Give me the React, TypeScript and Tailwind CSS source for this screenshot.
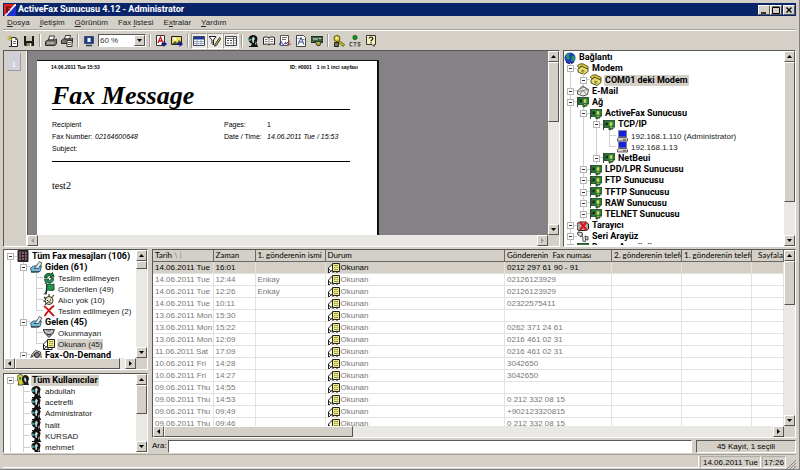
import React from 'react';
import clsx from 'clsx';

type IconName =
  | 'logo' | 'new' | 'save' | 'print' | 'printAll' | 'screen' | 'exportText' | 'exportImage'
  | 'table' | 'filter' | 'columns' | 'user' | 'book' | 'sign' | 'fontDoc' | 'card' | 'key' | 'cts' | 'help'
  | 'globe' | 'modem' | 'mail' | 'network' | 'pc' | 'scanner' | 'serial' | 'archive' | 'tray' | 'resend'
  | 'flag' | 'noRecipient' | 'cross' | 'unread' | 'read' | 'demand' | 'users';

const ICONS: Record<IconName, React.ReactNode> = {
  logo: (
    <>
      <path d="M0 0h11L0 12z" fill="#e02020" />
      <path d="M12 1v11H2z" fill="#2030d0" />
      <path d="M12 0 1 12" stroke="#fff" strokeWidth="1.6" />
      <path d="M3 9V3h4M3 6h3" stroke="#3a1010" strokeWidth="1.2" fill="none" />
    </>
  ),
  new: (
    <>
      <path d="M4.5 2.5h4l2 2v7h-6z" fill="#fff" stroke="#222" />
      <path d="M8.5 2.5v2h2M6 6.5h3M6 8.5h3" stroke="#444" fill="none" strokeWidth=".8" />
      <path d="M3 0v6M0 3h6M1 1l4 4M5 1 1 5" stroke="#b8a820" strokeWidth=".8" />
      <path d="M2 11.5h2" stroke="#222" />
    </>
  ),
  save: (
    <>
      <path d="M1 1h10v10H2l-1-1z" fill="#1c1c10" />
      <path d="M3 1h6v5H3z" fill="#c4c4b8" />
      <path d="M3.5 8h5v3h-5z" fill="#8a8a70" />
      <path d="M7 8.5h1V11H7z" fill="#fff" />
    </>
  ),
  print: (
    <>
      <path d="M4.500 1h5L8.500 5h-5z" fill="#fff" stroke="#222" strokeWidth=".9" />
      <path d="M.5 6.500 3 5h7l1.500-1v4.500L10 10.500H.5z" fill="#77776f" stroke="#222" strokeWidth=".9" />
      <path d="M2 8h7M5 3h3" stroke="#e4e4e0" strokeWidth=".9" />
    </>
  ),
  printAll: (
    <>
      <path d="M4.500.5h5L8.500 4h-5z" fill="#fff" stroke="#222" strokeWidth=".9" />
      <path d="M.5 5.500 2.500 4h8L11.500 3v4L10 8.500H.5z" fill="#77776f" stroke="#222" strokeWidth=".9" />
      <path d="M6 5.500h5v6H6z" fill="#fff" stroke="#222" strokeWidth=".9" />
      <path d="M7 7.500h3M7 9.500h3" stroke="#333" strokeWidth=".8" />
    </>
  ),
  screen: (
    <>
      <path d="M1.500 1.500h9v7h-9z" fill="#1a3f8f" stroke="#3c4c70" />
      <path d="M4.500 3h3v4h-3z" fill="#fff" />
      <path d="M3 10.500h6" stroke="#30405c" strokeWidth="1.500" />
    </>
  ),
  exportText: (
    <>
      <path d="M1.500.5h8v10h-8z" fill="#fff" stroke="#333" />
      <path d="m3 8 2.500-6L8 8M4 6h3" stroke="#d01818" strokeWidth="1.300" fill="none" />
      <path d="M6.500 8h2V6l3.500 3-3.500 3v-2h-2z" fill="#181890" />
    </>
  ),
  exportImage: (
    <>
      <path d="M.5 1.500h10v8H.5z" fill="#e8e060" stroke="#222" />
      <circle cx="4" cy="4" r="1.400" fill="#fff" />
      <path d="m1 9 3-3 2 2 2-3 2 2v2z" fill="#555530" />
      <path d="M6.500 8h2V6l3.500 3-3.500 3v-2h-2z" fill="#181890" />
    </>
  ),
  table: (
    <>
      <path d="M.5 1.500h11v9H.5z" fill="#fff" stroke="#445" />
      <path d="M1 2h10v2.500H1z" fill="#2038a0" />
      <path d="M4 4v6M8 4v6M1 6.500h10M1 8.500h10" stroke="#8090b0" strokeWidth=".8" />
    </>
  ),
  filter: (
    <>
      <path d="M0 1.500h7L4.500 5v5L3 8.500V5z" fill="#fff" stroke="#222" />
      <path d="m6 9.500 4.500-7 1.300 1-4.500 7L5.500 11z" fill="#d8d040" stroke="#222" strokeWidth=".9" />
    </>
  ),
  columns: (
    <>
      <path d="M.5 1.500h11v9H.5z" fill="#fff" stroke="#444" />
      <path d="M8.500 2v8M1 3.500h10" stroke="#555" strokeWidth=".8" />
      <path d="M2 5.500h2M5 5.500h2M2 8h2M5 8h2M9.500 5.500h1M9.500 8h1" stroke="#444" />
    </>
  ),
  user: (
    <>
      <path d="M1.500 4c0-3 3-4 5-4s4 1.500 4 3.500L9.500 8l1.500 4H3.500L5 8.500C3 8.500 1.500 6 1.500 4z" fill="#111" />
      <path d="M6 1.500 5 4l.5 3.500 1.500.5V5.500l1-2zM8.500 6 8 9l1 1z" fill="#d8d8d0" />
      <path d="M2 3.500h2l1 1-1 1.500H2z" fill="#2c9aa0" />
      <path d="M2 11.500h9" stroke="#111" />
    </>
  ),
  book: (
    <>
      <path d="M.5 2.500C3 1.500 5 2 6 3c1-1 3-1.500 5.500-.5v7C9 8.500 7 9 6 10c-1-1-3-1.500-5.500-.5z" fill="#fff" stroke="#222" />
      <path d="M6 3v7M2 4.500h2.500M2 6.500h2.500M7.500 4.500H10M7.500 6.500H10" stroke="#555" strokeWidth=".8" />
    </>
  ),
  sign: (
    <>
      <path d="M1.500.5h8v10h-8z" fill="#fff" stroke="#555" />
      <path d="M3 2.500h5M3 4.500h4" stroke="#444" strokeWidth=".8" />
      <path d="M0 10c2-4 3-4 3-2s2 2 3 0 1 2 3 1" stroke="#2030b0" fill="none" />
      <path d="m6 9 5-3M9 9h3" stroke="#b82838" />
    </>
  ),
  fontDoc: (
    <>
      <path d="M1.500.5h7l2 2v9h-9z" fill="#fff" stroke="#444" />
      <path d="m3 9.500 3-7 3 7M4 7h4" stroke="#30488c" fill="none" />
      <path d="M2.500 3.500h2M7 4.500h2.500" stroke="#667" strokeWidth=".8" />
    </>
  ),
  card: (
    <>
      <path d="M0 1.500h12v6H0z" fill="#3c6048" stroke="#1c3020" />
      <path d="M2 4h5M8 3.500h2" stroke="#dfe8d8" strokeWidth="1.200" />
      <path d="M4 6.500h6l-1 4H6z" fill="#a8b040" stroke="#222" strokeWidth=".8" />
    </>
  ),
  key: (
    <>
      <path d="M6 5.500 11.500 9.500l-1 1.800-2-1-3-3.300z" fill="#d0c028" stroke="#55500c" strokeWidth=".8" />
      <circle cx="4" cy="3.500" r="3" fill="#e0d030" stroke="#55500c" />
      <path d="M1.500 7.500h4v4h-4z" fill="#77774c" stroke="#222" />
      <circle cx="3.500" cy="3" r="1" fill="#fff" />
    </>
  ),
  cts: (
    <>
      <circle cx="6" cy="2.500" r="2.200" fill="#0c9420" stroke="#0a4a14" strokeWidth=".6" />
      <path d="M3.500 7.500H1v3.500h2.500M4.500 7.500h3M6 7.500v4M11.500 7.500H9v1.700h2V11H8.500" stroke="#444" strokeWidth=".9" fill="none" />
    </>
  ),
  help: (
    <>
      <path d="M1.500.5h9v9H9v2L7 9.500H1.500z" fill="#f8f4c0" stroke="#333" />
      <path d="M4.300 3.500c0-2 3.500-2 3.500 0C7.800 5 6 4.800 6 6.200M6 7.300v1.200" stroke="#111" strokeWidth="1.200" fill="none" />
    </>
  ),
  globe: (
    <>
      <circle cx="6" cy="6" r="5.500" fill="#1c3cc0" />
      <path d="M2 3c2-2 4-2 4-1L5 4l1 2-2 2-2-2zM8 4l2-1 1 4-2 3-2-2z" fill="#20985c" />
      <path d="M2 10c2 2 6 2 8 0" stroke="#0c1850" fill="none" />
    </>
  ),
  modem: (
    <>
      <path d="M1 6 5 3l6 3v2.500L7 11.500 1 9z" fill="#e8e070" stroke="#4a4410" strokeWidth=".9" />
      <path d="M.5 3.500C1 .5 6 0 8 2l3 1.500V6L8.500 5 4 3 2.500 5z" fill="#d4c83c" stroke="#4a4410" strokeWidth=".9" />
      <path d="m4.500 7 3 1.200M4.500 8.500l2 .8" stroke="#55501c" strokeWidth=".9" />
    </>
  ),
  mail: (
    <>
      <path d="m.5 6 5-5 6 3.500-1 5L6 11 .5 9z" fill="#eeeeea" stroke="#444" strokeWidth=".9" />
      <path d="m1 6.500 5-1 5.500-1M3 9l3-3.500L9.500 9.500M3 4l4-2 2 1.500" stroke="#666" strokeWidth=".8" fill="none" />
    </>
  ),
  network: (
    <>
      <path d="M.5 1v10" stroke="#444" />
      <path d="M1 1.500h11v6.500H10v2H7.500v1H6V8.500H1z" fill="#2f7d3c" stroke="#173c1c" strokeWidth=".8" />
      <path d="M2.500 3.500h2.300v3H2.500z" fill="#122a14" />
      <path d="M7 3.500h2v3H7zM7 8.500h2.500" fill="#d8d860" stroke="#c8c850" strokeWidth=".7" />
    </>
  ),
  pc: (
    <>
      <path d="M2.500.5h8v6.500h-8z" fill="#1420e0" stroke="#888" />
      <path d="m1.500 8.500 1-1h8l1 1V11h-10z" fill="#d4d0c8" stroke="#444" strokeWidth=".8" />
      <path d="M7 9.700h3" stroke="#333" strokeWidth=".8" />
    </>
  ),
  scanner: (
    <>
      <path d="M0 3.500 3 2h6l2.500 2v5l-2 1.500h-8L0 9z" fill="#aaa" stroke="#222" />
      <path d="m3 2 6.500 8M9.500 2 3 10" stroke="#e01414" strokeWidth="2" />
    </>
  ),
  serial: (
    <>
      <path d="m1 1 4 .5.5 3-2.500 1L.5 3z" fill="#ddd" stroke="#333" />
      <path d="M4 5c4 0 0 5 3 5.500 3 0 1-4 3-3.500" stroke="#777" strokeWidth="1.300" fill="none" />
      <path d="m8 5 3 1v3l-2.500-.5z" fill="#ddd" stroke="#333" strokeWidth=".9" />
    </>
  ),
  archive: (
    <>
      <path d="M1 .5h10v11H1z" fill="#2c2438" stroke="#222" />
      <path d="M2 3h8M2 6h8M2 9h8" stroke="#b0a878" strokeWidth="1.200" strokeDasharray="2 1" />
      <path d="M3 1v10M8.500 1v10" stroke="#94445c" strokeWidth=".8" />
    </>
  ),
  tray: (
    <>
      <path d="m.5 7 3-2h8L10 10.500 1.500 11z" fill="#6fc0dc" stroke="#27566c" strokeWidth=".9" />
      <path d="m4 7.500 2-2L9.500.5 12 2 8.500 7.500z" fill="#d8eef4" stroke="#333" strokeWidth=".8" />
      <path d="M1 11h8" stroke="#222" />
    </>
  ),
  resend: (
    <>
      <path d="M1.500 6C1 2.500 5 0 8 2l1.500-1.500L11 5l-4.500.5L8 4C5.500 3 4 4.500 4 6z" fill="#1c8a40" stroke="#0c3018" strokeWidth=".8" />
      <path d="M10.500 6.500c.5 3.500-3 5.500-6 4L3 12 1.500 7.500 6 7 4.500 8.500C7 9.500 8 8 8 6.500z" fill="#2c9a6a" stroke="#0c3018" strokeWidth=".8" />
    </>
  ),
  flag: (
    <>
      <path d="m3 11.500L4 1" stroke="#111" strokeWidth="1.300" />
      <path d="M4 1.500c2-1.500 4 1 7-.5v6c-3 1.500-5-1-7.500.5z" fill="#22984a" stroke="#123c1c" strokeWidth=".9" />
      <path d="M1 11.500 4 8" stroke="#111" />
    </>
  ),
  noRecipient: (
    <>
      <circle cx="6" cy="6.500" r="4" fill="#e4e4b8" stroke="#333" />
      <path d="m1 3 2 2M11 1 8.500 4M2 11l1.500-2M6 0v2M0 7h2" stroke="#222" strokeWidth="1.100" />
      <path d="M4 6.500h1M7 6h1M4.500 8.500c1-1 2-1 3 0" stroke="#111" fill="none" />
      <path d="m9 1 2 1-1 2z" fill="#d8c828" />
    </>
  ),
  cross: <path d="M1.500 1.500c3 2 6 6 9 9M10.500 1C7 4 4 7 2 10.500" stroke="#d01010" strokeWidth="1.800" fill="none" strokeLinecap="round" />,
  unread: (
    <>
      <path d="M0 2.500h11.500L10 6.500 6 10.500 2 6.500z" fill="#9a949c" stroke="#333" strokeWidth=".9" />
      <path d="m2 3.500 4 2.500 4-2.500" stroke="#eee" fill="none" />
      <path d="M4 7.500h4" stroke="#333" />
    </>
  ),
  read: (
    <>
      <path d="M.5 6 4 2.500 5 6v5.500H.5z" fill="#fff" stroke="#222" />
      <path d="m1 7 2 2.500L5 7M1 11l2-2" stroke="#222" strokeWidth=".9" fill="none" />
      <path d="M4.500 1.500h7v8h-7z" fill="#f0ec88" stroke="#222" />
      <path d="M6 3.500h4M6 5.500h1.500M8.500 5.500H10M6 7.500h4" stroke="#8f8c40" strokeWidth=".9" />
      <path d="M1 11.500h8v-2" stroke="#222" fill="none" />
    </>
  ),
  demand: (
    <>
      <path d="m.5 11 1-5 4-4.500 5 1.500 1 8z" fill="#e4e4e0" stroke="#444" />
      <circle cx="7" cy="6" r="2.500" fill="#888" stroke="#222" />
      <path d="M2 8c1-2 2-3 3-3" stroke="#222" fill="none" />
    </>
  ),
  users: (
    <>
      <path d="M0 4c0-2.500 2-3.500 3.500-3.500S7 2 7 4L6 11H1l1-3C.5 7.500 0 6 0 4z" fill="#d8cc28" stroke="#333" strokeWidth=".8" />
      <path d="M5 5c0-3 2-4 3.500-4s3.500 1 3.500 4l-1 3 1 3H6l1-2C5.500 8.500 5 7 5 5z" fill="#1c1c1c" />
      <path d="m8 3-1 2 1 3 1.500-.5L9 5z" fill="#dcdcd4" />
      <path d="M2 3h2v3H2z" fill="#2c8c8c" />
    </>
  ),
};

function Icon({ name, className = 'size-3' }: { name: IconName; className?: string }) {
  return (
    <svg viewBox="0 0 12 12" className={clsx('shrink-0', className)} fill="none" aria-hidden="true">
      {ICONS[name]}
    </svg>
  );
}

const RAISED = 'border border-t-white border-l-white border-r-[#55534f] border-b-[#55534f] bg-[#d4d0c8]';
const SUNKEN = 'border border-t-[#5a5854] border-l-[#5a5854] border-r-white border-b-white';

type Direction = 'up' | 'down' | 'left' | 'right';

const ARROWS: Record<Direction, string> = {
  up: 'M0 4h5L2.500 1z',
  down: 'M0 1h5L2.500 4z',
  left: 'M4 0v5L1 2.500z',
  right: 'M1 0v5l3-2.500z',
};

function ScrollButton({ direction, muted }: { direction: Direction; muted?: boolean }) {
  return (
    <button type="button" aria-label={direction} className={clsx('flex size-[11px] shrink-0 items-center justify-center', RAISED)}>
      <svg viewBox="0 0 5 5" className="size-[5px]" aria-hidden="true">
        <path d={ARROWS[direction]} fill={muted ? '#9a9894' : '#000'} />
      </svg>
    </button>
  );
}

function ScrollBar({ horizontal, thumb, muted }: { horizontal?: boolean; thumb?: string; muted?: boolean }) {
  return (
    <div className={clsx('flex shrink-0 bg-[#eae8e4]', horizontal ? 'h-[11px]' : 'w-[11px] flex-col')}>
      <ScrollButton direction={horizontal ? 'left' : 'up'} muted={muted} />
      <div className={clsx('flex min-h-0 min-w-0 flex-1', !horizontal && 'flex-col')}>
        {thumb && <div className={clsx(RAISED, thumb)} />}
      </div>
      <ScrollButton direction={horizontal ? 'right' : 'down'} muted={muted} />
    </div>
  );
}

// Guides: I = line through, E = expander, F = first expander, T = branch, L = last branch
interface TreeItem {
  guides: string;
  icon: IconName;
  label: string;
  bold?: boolean;
  selected?: boolean;
}

function Guide({ kind }: { kind: string }) {
  const expander = kind === 'E' || kind === 'F';
  return (
    <span className="relative flex w-[13px] shrink-0 self-stretch pl-[6px]">
      {kind === 'I' && <span className="border-l border-[#d0d0d0]" />}
      {kind === 'L' && <span className="h-1/2 flex-1 border-b border-l border-[#d0d0d0]" />}
      {(kind === 'T' || kind === 'E') && (
        <span className="flex-1 border-l border-[#d0d0d0]">
          <span className="block h-1/2 border-b border-[#d0d0d0]" />
        </span>
      )}
      {kind === 'F' && (
        <span className="flex flex-1 flex-col justify-end">
          <span className="h-1/2 border-t border-l border-[#d0d0d0]" />
        </span>
      )}
      {expander && (
        <span className="absolute inset-0 flex items-center justify-center">
          <span className="flex size-[7px] items-center justify-center border border-[#b4b4b4] bg-white">
            <span className="h-px w-[3px] bg-[#333]" />
          </span>
        </span>
      )}
    </span>
  );
}

function TreeRow({ item }: { item: TreeItem }) {
  return (
    <>
      {item.guides.split('').map((kind, i) => (
        <Guide key={i} kind={kind} />
      ))}
      <Icon name={item.icon} />
      <span
        className={clsx(
          'ml-[2px] px-px leading-[11px] whitespace-nowrap',
          item.bold ? 'font-[Roboto,sans-serif] text-[9px] font-bold text-black' : 'text-[8px] text-[#222]',
          item.selected && 'bg-[#d4d0c8]',
        )}
      >
        {item.label}
      </span>
    </>
  );
}

// The row under the last full one is only shown as far as the panel reaches
function Tree({ items, label, partialHeight }: { items: TreeItem[]; label: string; partialHeight: string }) {
  const full = items.slice(0, -1);
  const partial = items[items.length - 1];

  return (
    <ul aria-label={label} className="flex min-h-0 min-w-0 flex-1 flex-col overflow-hidden bg-white pt-px">
      {full.map((item) => (
        <li key={item.guides + item.label} className="flex min-h-0 flex-1 items-center">
          <TreeRow item={item} />
        </li>
      ))}
      <li className={clsx('shrink-0 overflow-hidden', partialHeight)}>
        <div className="flex h-[11px] items-center">
          <TreeRow item={partial} />
        </div>
      </li>
    </ul>
  );
}

const CONNECTIONS: TreeItem[] = [
  { guides: '', icon: 'globe', label: 'Bağlantı', bold: true },
  { guides: 'E', icon: 'modem', label: 'Modem', bold: true },
  { guides: 'IE', icon: 'modem', label: 'COM01 deki Modem', bold: true, selected: true },
  { guides: 'E', icon: 'mail', label: 'E-Mail', bold: true },
  { guides: 'E', icon: 'network', label: 'Ağ', bold: true },
  { guides: 'IE', icon: 'network', label: 'ActiveFax Sunucusu', bold: true },
  { guides: 'IIE', icon: 'network', label: 'TCP/IP', bold: true },
  { guides: 'IIIT', icon: 'pc', label: '192.168.1.110 (Administrator)' },
  { guides: 'IIIL', icon: 'pc', label: '192.168.1.13' },
  { guides: 'IIE', icon: 'network', label: 'NetBeui', bold: true },
  { guides: 'IE', icon: 'network', label: 'LPD/LPR Sunucusu', bold: true },
  { guides: 'IE', icon: 'network', label: 'FTP Sunucusu', bold: true },
  { guides: 'IE', icon: 'network', label: 'TFTP Sunucusu', bold: true },
  { guides: 'IE', icon: 'network', label: 'RAW Sunucusu', bold: true },
  { guides: 'IE', icon: 'network', label: 'TELNET Sunucusu', bold: true },
  { guides: 'E', icon: 'scanner', label: 'Tarayıcı', bold: true },
  { guides: 'E', icon: 'serial', label: 'Seri Arayüz', bold: true },
  { guides: 'E', icon: 'network', label: 'Dosya Arayüzü', bold: true },
];

const FOLDERS: TreeItem[] = [
  { guides: 'F', icon: 'archive', label: 'Tüm Fax mesajları (106)', bold: true },
  { guides: 'IE', icon: 'tray', label: 'Giden (61)', bold: true },
  { guides: 'IIT', icon: 'resend', label: 'Teslim edilmeyen' },
  { guides: 'IIT', icon: 'flag', label: 'Gönderilen (49)' },
  { guides: 'IIT', icon: 'noRecipient', label: 'Alıcı yok (10)' },
  { guides: 'IIL', icon: 'cross', label: 'Teslim edilmeyen (2)' },
  { guides: 'IE', icon: 'tray', label: 'Gelen (45)', bold: true },
  { guides: 'IIT', icon: 'unread', label: 'Okunmayan' },
  { guides: 'IIL', icon: 'read', label: 'Okunan (45)', selected: true },
  { guides: 'IE', icon: 'demand', label: 'Fax-On-Demand', bold: true },
];

const USERS: TreeItem[] = [
  { guides: 'F', icon: 'users', label: 'Tüm Kullanıcılar', bold: true, selected: true },
  ...['abdullah', 'acetrefli', 'Administrator', 'halit', 'KURSAD', 'mehmet'].map(
    (label): TreeItem => ({ guides: 'IT', icon: 'user', label }),
  ),
];

const MENU: [string, string, string][] = [
  ['', 'D', 'osya'],
  ['', 'İ', 'letişim'],
  ['', 'G', 'örünüm'],
  ['Fax ', 'l', 'istesi'],
  ['E', 'x', 'tralar'],
  ['', 'Y', 'ardım'],
];

const FAXES: [string, string, string, string][] = [
  ['14.06.2011 Tue', '16:01', '', '0212 297 61 90 - 91'],
  ['14.06.2011 Tue', '12:44', 'Enkay', '02126123929'],
  ['14.06.2011 Tue', '12:26', 'Enkay', '02126123929'],
  ['14.06.2011 Tue', '10:11', '', '02322575411'],
  ['13.06.2011 Mon', '15:30', '', ''],
  ['13.06.2011 Mon', '15:22', '', '0262 371 24 61'],
  ['13.06.2011 Mon', '12:09', '', '0216 461 02 31'],
  ['11.06.2011 Sat', '17:09', '', '0216 461 02 31'],
  ['10.06.2011 Fri', '14:28', '', '3042650'],
  ['10.06.2011 Fri', '14:27', '', '3042650'],
  ['09.06.2011 Thu', '14:55', '', ''],
  ['09.06.2011 Thu', '14:53', '', '0 212 332 08 15'],
  ['09.06.2011 Thu', '09:49', '', '+902123320815'],
  ['09.06.2011 Thu', '09:46', '', '0 212 332 08 15'],
];

const COLUMNS: { title: string; width: string }[] = [
  { title: 'Tarih', width: 'w-[60px]' },
  { title: 'Zaman', width: 'w-[42px]' },
  { title: '1. gönderenin ismi', width: 'w-[70px]' },
  { title: 'Durum', width: '' },
  { title: 'Gönderenin  Fax numası', width: 'w-[107px]' },
  { title: '2. gönderenin telefo', width: 'w-[70px]' },
  { title: '1. gönderenin telefo', width: 'w-[70px]' },
  { title: 'Sayfala', width: 'w-[32px]' },
];

function TitleBar() {
  const button = clsx('flex h-[10px] w-[12px] items-center justify-center', RAISED);
  return (
    <header className="flex h-[13px] shrink-0 items-center bg-[#0a246a] px-px">
      <Icon name="logo" />
      <h1 className="ml-[2px] flex-1 font-[Roboto,sans-serif] text-[9px] leading-[13px] font-bold text-white">
        ActiveFax Sunucusu 4.12 - Administrator
      </h1>
      <button type="button" aria-label="Minimize" className={button}>
        <svg viewBox="0 0 8 8" className="size-2"><path d="M1 7h5" stroke="#000" strokeWidth="1.500" /></svg>
      </button>
      <button type="button" aria-label="Maximize" className={button}>
        <svg viewBox="0 0 8 8" className="size-2"><path d="M.5 1.500h7v6h-7zM.5 1h7" stroke="#000" fill="none" /></svg>
      </button>
      <button type="button" aria-label="Close" className={clsx('ml-px', button)}>
        <svg viewBox="0 0 8 8" className="size-2"><path d="m1.500 1.500 5 5M6.500 1.500l-5 5" stroke="#000" strokeWidth="1.300" /></svg>
      </button>
    </header>
  );
}

function ToolButton({ icon, label, pressed }: { icon: IconName; label: string; pressed?: boolean }) {
  return (
    <button
      type="button"
      aria-label={label}
      className={clsx(
        'flex size-4 shrink-0 items-center justify-center',
        pressed && 'border border-t-[#a09c94] border-l-[#a09c94] border-r-white border-b-white bg-[#eceae6]',
      )}
    >
      <Icon name={icon} />
    </button>
  );
}

function Separator() {
  return <span className="mx-[2px] h-[13px] w-[2px] shrink-0 border-r border-l border-l-[#9a968e] border-r-white" />;
}

function ToolBar() {
  return (
    <div className="flex h-[20px] shrink-0 items-center border-t border-white pl-[2px]">
      <ToolButton icon="new" label="Yeni" />
      <ToolButton icon="save" label="Kaydet" />
      <Separator />
      <ToolButton icon="print" label="Yazdır" />
      <ToolButton icon="printAll" label="Tümünü yazdır" />
      <Separator />
      <ToolButton icon="screen" label="Ekran" />
      <div className={clsx('relative mx-px flex h-[13px] w-[48px] bg-white', SUNKEN)}>
        <select aria-label="Zoom" className="w-full appearance-none bg-transparent pl-px text-[8px] leading-[11px] text-[#333]">
          <option>60 %</option>
        </select>
        <span className={clsx('pointer-events-none absolute top-0 right-0 flex h-[11px] w-[11px] items-center justify-center', RAISED)}>
          <svg viewBox="0 0 5 5" className="size-[5px]"><path d={ARROWS.down} /></svg>
        </span>
      </div>
      <Separator />
      <ToolButton icon="exportText" label="Metin aktar" />
      <ToolButton icon="exportImage" label="Resim aktar" />
      <Separator />
      <ToolButton icon="table" label="Liste" pressed />
      <ToolButton icon="filter" label="Filtre" pressed />
      <ToolButton icon="columns" label="Sütunlar" pressed />
      <Separator />
      <ToolButton icon="user" label="Kullanıcılar" />
      <ToolButton icon="book" label="Adres defteri" />
      <ToolButton icon="sign" label="İmza" />
      <ToolButton icon="fontDoc" label="Yazı tipi" />
      <ToolButton icon="card" label="Ağ kartı" />
      <Separator />
      <ToolButton icon="key" label="Lisans" />
      <ToolButton icon="cts" label="CTS" />
      <ToolButton icon="help" label="Yardım" />
    </div>
  );
}

function FaxPage() {
  return (
    <article className="w-[342px] border-t border-r-2 border-[#111] bg-white px-[14px] pt-[3px] text-black">
      <div className="flex justify-between pr-[5px] text-[5px] leading-[6px] font-bold">
        <span>14.06.2011 Tue 15:53</span>
        <span className="flex gap-[5px]">
          <span>ID: #0001</span>
          <span>1 in 1 inci sayfası</span>
        </span>
      </div>
      <div className="mr-[13px] ml-px">
        <h2 className="mt-[12px] border-b border-black font-['Liberation_Serif',serif] text-[26px] leading-[27px] font-bold italic">
          Fax Message
        </h2>
        <dl className="mt-[9px] grid grid-cols-[43px_129px_43px_1fr] border-b border-black pb-[6px] text-[7px] leading-[12px]">
          <dt>Recipient</dt>
          <dd />
          <dt>Pages:</dt>
          <dd>1</dd>
          <dt>Fax Number:</dt>
          <dd className="italic">02164600648</dd>
          <dt>Date / Time:</dt>
          <dd className="italic">14.06.2011 Tue / 15:53</dd>
          <dt>Subject:</dt>
          <dd />
        </dl>
        <p className="mt-[18px] font-['Liberation_Serif',serif] text-[10px] leading-[12px]">test2</p>
      </div>
    </article>
  );
}

function Preview() {
  return (
    <section className={clsx('flex min-w-0 flex-1', SUNKEN)}>
      <aside className="w-[22px] shrink-0 pt-[2px] pl-1">
        <button
          type="button"
          className="flex h-[18px] w-[13px] items-end justify-center border-r border-b border-[#9a9a9a] bg-[#d0d0dc] text-[8px] leading-[10px] text-white"
        >
          1
        </button>
      </aside>
      <div className="flex min-w-0 flex-1 flex-col border-l border-white">
        <div className="flex min-h-0 flex-1">
          <div className="flex min-w-0 flex-1 items-stretch overflow-hidden border-l border-[#5a5854] bg-[#848284] pt-[9px] pl-[9px]">
            <FaxPage />
          </div>
          <ScrollBar thumb="h-[37%]" />
        </div>
        <div className="flex">
          <div className="flex min-w-0 flex-1 flex-col">
            <ScrollBar horizontal muted />
          </div>
          <span className="w-[11px]" />
        </div>
      </div>
    </section>
  );
}

function FaxTable() {
  return (
    <section className={clsx('flex min-h-0 flex-1 flex-col bg-white', SUNKEN)}>
      <div className="flex min-h-0 flex-1">
        <div className="min-w-0 flex-1 overflow-hidden">
          <table className="w-full table-fixed border-collapse text-[8px] leading-[11px]">
            <thead className="font-[Lato,sans-serif]">
              <tr className="bg-[#d4d0c8]">
                {COLUMNS.map(({ title, width }) => (
                  <th
                    key={title}
                    className={clsx(
                      'h-3 overflow-hidden border-r border-b border-[#6a6864] p-0 text-left font-normal whitespace-pre text-black',
                      title === 'Sayfala' ? 'pl-[6px]' : 'pl-[2px]',
                      width,
                    )}
                  >
                    {title}
                    {title === 'Tarih' && <span className="ml-[2px] text-[#8a8882]">\ |</span>}
                  </th>
                ))}
              </tr>
            </thead>
            <tbody>
              {FAXES.map(([date, time, sender, number], i) => (
                <tr key={date + time} className={i === 0 ? 'bg-[#d4d0c8] text-black' : 'text-[#777]'}>
                  {[date, time, sender, 'Okunan', number, '', '', ''].map((cell, col) => (
                    <td key={col} className="h-3 overflow-hidden border-r border-b border-[#e4e2de] p-0 pl-[2px] whitespace-nowrap">
                      {col === 3 ? (
                        <span className="flex h-[11px] items-center gap-px">
                          <Icon name="read" />
                          <span>{cell}</span>
                        </span>
                      ) : (
                        cell
                      )}
                    </td>
                  ))}
                </tr>
              ))}
            </tbody>
          </table>
        </div>
        <ScrollBar thumb="h-[29%]" />
      </div>
      <div className="flex bg-[#d4d0c8]">
        <div className="flex min-w-0 flex-1 flex-col">
          <ScrollBar horizontal thumb="w-[31%]" />
        </div>
        <span className="w-[11px]" />
      </div>
    </section>
  );
}

export default function App() {
  return (
    <div className="flex h-screen flex-col overflow-hidden border-r border-b border-[#808080] bg-[#d4d0c8] px-[3px] pt-[3px] font-['Liberation_Sans',Arial,sans-serif] text-black">
      <TitleBar />
      <nav className="flex h-[14px] shrink-0 items-center gap-[10px] border-b border-[#a8a49c] pl-1 text-[8px] leading-[12px] text-[#222]">
        {MENU.map(([before, key, after]) => (
          <button key={key} type="button" className="whitespace-pre">
            {before}
            <u>{key}</u>
            {after}
          </button>
        ))}
      </nav>
      <ToolBar />

      <main className="flex min-h-0 flex-1 flex-col gap-[2px]">
        <div className="flex min-h-0 flex-[197_1_0%] gap-[3px]">
          <Preview />
          <section className={clsx('flex w-[233px] shrink-0 bg-white', SUNKEN)}>
            <Tree items={CONNECTIONS} label="Bağlantı" partialHeight="h-[3px]" />
            <ScrollBar thumb="h-[81%]" />
          </section>
        </div>

        <div className="flex min-h-0 flex-[205_1_0%] gap-1">
          <div className="flex w-[145px] shrink-0 flex-col gap-[3px]">
            <section className={clsx('flex min-h-0 flex-[122_1_0%] flex-col', SUNKEN)}>
              <div className="flex min-h-0 flex-1">
                <Tree items={FOLDERS} label="Fax mesajları" partialHeight="h-[8px]" />
                <ScrollBar thumb="h-2" />
              </div>
              <div className="flex">
                <div className="flex min-w-0 flex-1 flex-col">
                  <ScrollBar horizontal thumb="w-[95%]" />
                </div>
                <span className="w-[11px]" />
              </div>
            </section>
            <section className={clsx('flex min-h-0 flex-[80_1_0%]', SUNKEN)}>
              <Tree items={USERS} label="Kullanıcılar" partialHeight="h-[10px]" />
              <ScrollBar thumb="h-[52%]" />
            </section>
          </div>

          <div className="flex min-w-0 flex-1 flex-col gap-px">
            <FaxTable />
            <div className="flex h-[14px] shrink-0 items-center text-[8px]">
              <label htmlFor="search" className="w-4 leading-[12px]">
                Ara:
              </label>
              <input id="search" type="text" className={clsx('h-[13px] min-w-0 flex-1 bg-white px-1', SUNKEN)} />
              <output className={clsx('ml-1 h-[13px] w-[100px] text-center leading-[11px]', SUNKEN)}>45 Kayıt, 1 seçili</output>
            </div>
          </div>
        </div>
      </main>

      <footer className="mt-px flex h-[15px] shrink-0 items-center gap-px border-t border-[#a8a49c] text-[8px] leading-[11px]">
        <span className="h-[12px] flex-1 border-r border-b border-white" />
        <span className="h-[12px] border border-[#b0aca4] border-r-white border-b-white px-[2px]">14.06.2011 Tue</span>
        <span className="h-[12px] border border-[#b0aca4] border-r-white border-b-white px-px">17:26</span>
        <svg viewBox="0 0 9 9" className="size-[9px] self-end" aria-hidden="true">
          <path d="m0 9 9-9M3 9l6-6M6 9l3-3" stroke="#8a8680" />
        </svg>
      </footer>
    </div>
  );
}
